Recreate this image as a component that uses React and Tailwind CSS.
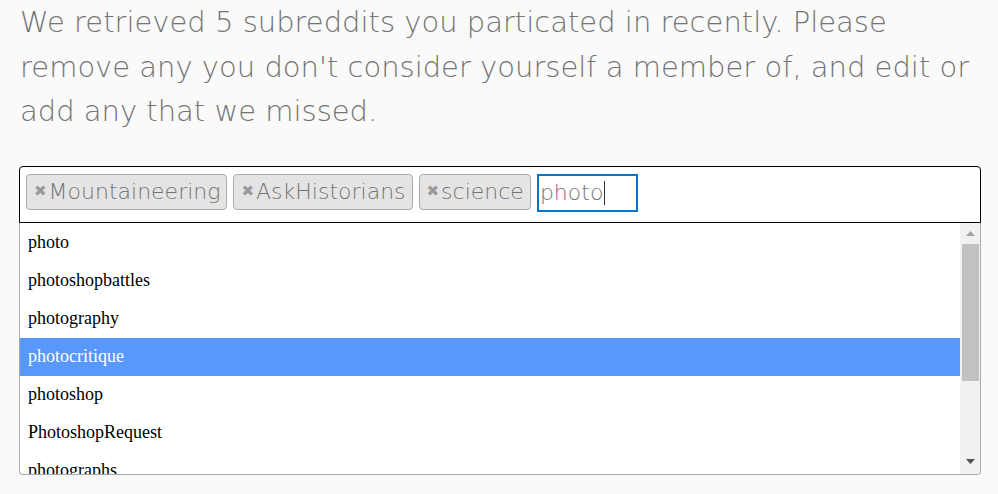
import React from "react";

const tags = ["Mountaineering", "AskHistorians", "science"];
const items = [
  "photo",
  "photoshopbattles",
  "photography",
  "photocritique",
  "photoshop",
  "PhotoshopRequest",
  "photographs",
];

const sans = { fontFamily: "'DejaVu Sans', sans-serif", fontWeight: 200 };

export default function App() {
  return (
    <div className="bg-[#fafafa] px-[19px] overflow-hidden" style={{ height: 494 }}>
      <p className="text-[29px] leading-[44.5px] text-[#747474] pl-px" style={sans}>
        We retrieved 5 subreddits you particated in recently. Please
        <br />
        remove any you don't consider yourself a member of, and edit or
        <br />
        add any that we missed.
      </p>
      <div className="mt-[32px] w-[962px]">
        <div className="h-[57px] border border-black rounded-t-[4px] bg-white flex items-start gap-[6px] pl-[6px] pt-[7px]">
          {tags.map((t) => (
            <div
              key={t}
              className="h-[36px] flex items-center rounded-[4px] border border-[#aaaaaa] bg-[#e4e4e4] pl-[7px] pr-[6px] text-[22px] text-[#747474]"
              style={sans}
            >
              <span className="text-[#999999] text-[15px] mr-[2px]" style={{ fontFamily: "'DejaVu Sans', sans-serif", fontWeight: 700 }}>✖</span>
              {t}
            </div>
          ))}
          <div
            className="h-[38px] w-[101px] border-2 border-[#0077cc] bg-white flex items-center pl-[1px] text-[22px] text-[#747474]"
            style={sans}
          >
            photo<span className="inline-block w-px h-[24px] bg-[#333] ml-px"></span>
          </div>
        </div>
        <div className="h-[252px] border-x border-b border-[#aaaaaa] rounded-b-[4px] bg-white flex overflow-hidden">
          <div className="flex-1 overflow-hidden pt-px" style={{ fontFamily: "'Liberation Serif', serif" }}>
            {items.map((it) => (
              <div
                key={it}
                className={
                  "h-[38px] flex items-center pl-[8px] text-[18px] " +
                  (it === "photocritique" ? "bg-[#5897fb] text-white" : "text-black")
                }
              >
                {it}
              </div>
            ))}
          </div>
          <div className="w-[20px] bg-[#f1f1f1] flex flex-col items-center">
            <div className="h-[21px] flex items-center justify-center">
              <svg width="9" height="5" viewBox="0 0 9 5"><path d="M4.5 0L9 5H0z" fill="#a3a3a3" /></svg>
            </div>
            <div className="w-[17px] h-[137px] bg-[#c1c1c1]"></div>
            <div className="flex-1"></div>
            <div className="h-[24px] flex items-center justify-center">
              <svg width="9" height="5" viewBox="0 0 9 5"><path d="M0 0H9L4.5 5z" fill="#505050" /></svg>
            </div>
          </div>
        </div>
      </div>
    </div>
  );
}
